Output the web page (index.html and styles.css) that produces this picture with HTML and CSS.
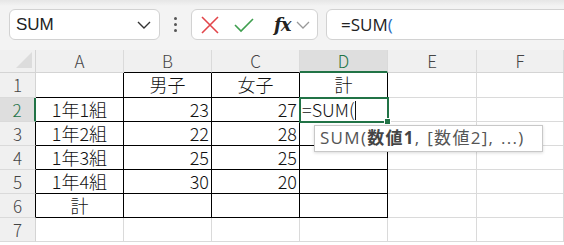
FILE: index.html
```html
<!DOCTYPE html>
<html lang="ja">
<head>
    <meta charset="UTF-8">
    <title>SUM</title>
    <link rel="stylesheet" href="styles.css">
</head>
<body>
    <div class="toolbar">
        <div class="name-box">
            <span>SUM</span>
            <svg class="chev" width="14" height="8" viewBox="0 0 14 8"><path d="M1 1l6 6 6-6" fill="none" stroke="#333" stroke-width="1.4"/></svg>
        </div>
        <div class="dots"><i></i><i></i><i></i></div>
        <div class="fx-group">
            <svg width="20" height="20" viewBox="0 0 20 20"><path d="M2 2l16 16M18 2L2 18" stroke="#e2454a" stroke-width="1.6" fill="none"/></svg>
            <svg width="20" height="20" viewBox="0 0 20 20"><path d="M1 10l6 6L19 4" stroke="#3f9f4f" stroke-width="1.6" fill="none"/></svg>
            <span class="fx">fx</span>
            <svg width="14" height="8" viewBox="0 0 14 8"><path d="M1 1l6 6 6-6" fill="none" stroke="#999" stroke-width="1.3"/></svg>
        </div>
        <div class="formula">=SUM<span class="paren">(</span></div>
    </div>

    <div class="sheet">
        <div class="corner"><span></span></div>
        <div class="hd">A</div>
        <div class="hd box-top">B</div>
        <div class="hd box-top">C</div>
        <div class="hd box-top sel-col">D</div>
        <div class="hd">E</div>
        <div class="hd">F</div>

        <div class="rh">1</div>
        <div class="c bx"></div>
        <div class="c bx mid">男子</div>
        <div class="c bx mid">女子</div>
        <div class="c bx mid">計</div>
        <div class="c"></div>
        <div class="c"></div>

        <div class="rh box-left sel-row">2</div>
        <div class="c bx mid">1年1組</div>
        <div class="c bx num">23</div>
        <div class="c bx num">27</div>
        <div class="c bx active">=SUM(<b class="caret"></b></div>
        <div class="c"></div>
        <div class="c"></div>

        <div class="rh box-left">3</div>
        <div class="c bx mid">1年2組</div>
        <div class="c bx num">22</div>
        <div class="c bx num">28</div>
        <div class="c bx"></div>
        <div class="c"></div>
        <div class="c"></div>

        <div class="rh box-left">4</div>
        <div class="c bx mid">1年3組</div>
        <div class="c bx num">25</div>
        <div class="c bx num">25</div>
        <div class="c bx"></div>
        <div class="c"></div>
        <div class="c"></div>

        <div class="rh box-left">5</div>
        <div class="c bx mid">1年4組</div>
        <div class="c bx num">30</div>
        <div class="c bx num">20</div>
        <div class="c bx"></div>
        <div class="c"></div>
        <div class="c"></div>

        <div class="rh box-left">6</div>
        <div class="c bx mid">計</div>
        <div class="c bx"></div>
        <div class="c bx"></div>
        <div class="c bx"></div>
        <div class="c"></div>
        <div class="c"></div>

        <div class="rh">7</div>
        <div class="c"></div>
        <div class="c"></div>
        <div class="c"></div>
        <div class="c"></div>
        <div class="c"></div>
        <div class="c"></div>

        <div class="tip">SUM(<b>数値1</b>, [数値2], ...)</div>
    </div>
</body>
</html>
```

FILE: styles.css
```css
body {
    margin: 0;
    background: #f3f3f3;
    font-family: "Noto Sans CJK JP", "Noto Sans", sans-serif;
    overflow: hidden;
}
.toolbar {
    height: 50px;
    box-sizing: border-box;
    padding: 9px 0 0 9px;
    display: flex;
    align-items: flex-start;
    background: linear-gradient(#e6e6e6, #f3f3f3 6px);
}
.name-box {
    width: 151px;
    height: 31px;
    box-sizing: border-box;
    background: #fff;
    border: 1px solid #d2d2d2;
    border-radius: 6px;
    display: flex;
    align-items: center;
    justify-content: space-between;
    padding: 0 8px 0 6px;
    font-family: "Liberation Sans", sans-serif;
    font-size: 17px;
    color: #222;
}
.dots {
    width: 31px;
    height: 31px;
    display: flex;
    flex-direction: column;
    align-items: center;
    justify-content: center;
    gap: 3px;
}
.dots i {
    width: 3px;
    height: 3px;
    border-radius: 50%;
    background: #555;
}
.fx-group {
    width: 127px;
    height: 31px;
    box-sizing: border-box;
    background: #fff;
    border: 1px solid #d2d2d2;
    border-radius: 6px;
    display: flex;
    align-items: center;
    padding: 0 4px 0 8px;
    gap: 14px;
}
.fx-group .fx {
    font-family: "DejaVu Serif", serif;
    font-style: italic;
    font-weight: bold;
    font-size: 18px;
    color: #222;
    margin-left: 6px;
    margin-right: -8px;
    letter-spacing: -1px;
}
.formula {
    flex: 1;
    margin-left: 8px;
    margin-right: -10px;
    height: 31px;
    box-sizing: border-box;
    background: #fff;
    border: 1px solid #d2d2d2;
    border-radius: 6px;
    padding-left: 14px;
    line-height: 29px;
    font-family: "Open Sans", sans-serif;
    font-size: 17px;
    color: #222;
}
.formula .paren {
    color: #2b6bc0;
}

.sheet {
    position: relative;
    display: grid;
    grid-template-columns: 36px 88px 88px 88px 88px 89px 1fr;
    grid-template-rows: 23px 25px repeat(6, 24px) 3px;
    background: #fff;
    font-size: 18px;
    color: #111;
}
.sheet > div {
    box-sizing: border-box;
}
.corner {
    background: #f0f0f0;
    border-right: 1px solid #d4d4d4;
    border-bottom: 1px solid #d4d4d4;
    position: relative;
}
.corner span {
    position: absolute;
    right: 3px;
    bottom: 4px;
    width: 0;
    height: 0;
    border-left: 16px solid transparent;
    border-bottom: 16px solid #dcdcdc;
}
.hd {
    background: #f0f0f0;
    border-right: 1px solid #dadada;
    border-bottom: 1px solid #d4d4d4;
    text-align: center;
    color: #444;
    font-size: 17px;
    font-weight: 300;
    line-height: 22px;
}
.hd.box-top {
    border-bottom-color: #000;
}
.hd.sel-col {
    background: #dedede;
    color: #217346;
    border-bottom: 2px solid #217346;
}
.rh {
    background: #f0f0f0;
    border-right: 1px solid #d4d4d4;
    border-bottom: 1px solid #dadada;
    text-align: center;
    color: #444;
    font-size: 17px;
    font-weight: 300;
    line-height: 23px;
}
.rh.box-left {
    border-right-color: #000;
}
.rh.sel-row {
    background: #dedede;
    color: #217346;
    border-right: 2px solid #217346;
}
.c {
    border-right: 1px solid #dadada;
    border-bottom: 1px solid #dadada;
    line-height: 23px;
    padding: 0 2px;
    white-space: nowrap;
    font-weight: 300;
}
.c.bx {
    border-right-color: #000;
    border-bottom-color: #000;
}
.c.mid {
    text-align: center;
}
.c.num {
    text-align: right;
}
.c.active {
    position: relative;
    outline: 2px solid #217346;
    outline-offset: -1px;
    z-index: 1;
}
.c.active::after {
    content: "";
    position: absolute;
    right: -4px;
    bottom: -4px;
    width: 5px;
    height: 5px;
    background: #217346;
    border: 1px solid #fff;
}
.caret {
    display: inline-block;
    width: 1px;
    height: 19px;
    background: #111;
    vertical-align: -3px;
}
.tip {
    position: absolute;
    left: 314px;
    top: 75px;
    width: 229px;
    height: 27px;
    box-sizing: border-box;
    background: #fff;
    border: 1px solid #c8c8c8;
    box-shadow: 0 1px 3px rgba(0, 0, 0, 0.15);
    padding-left: 5px;
    font-family: "Open Sans", "Noto Sans CJK JP", sans-serif;
    font-size: 17px;
    letter-spacing: 1.3px;
    word-spacing: 1px;
    line-height: 24px;
    color: #555;
    z-index: 2;
    white-space: nowrap;
}
.tip b {
    color: #444;
}
```
